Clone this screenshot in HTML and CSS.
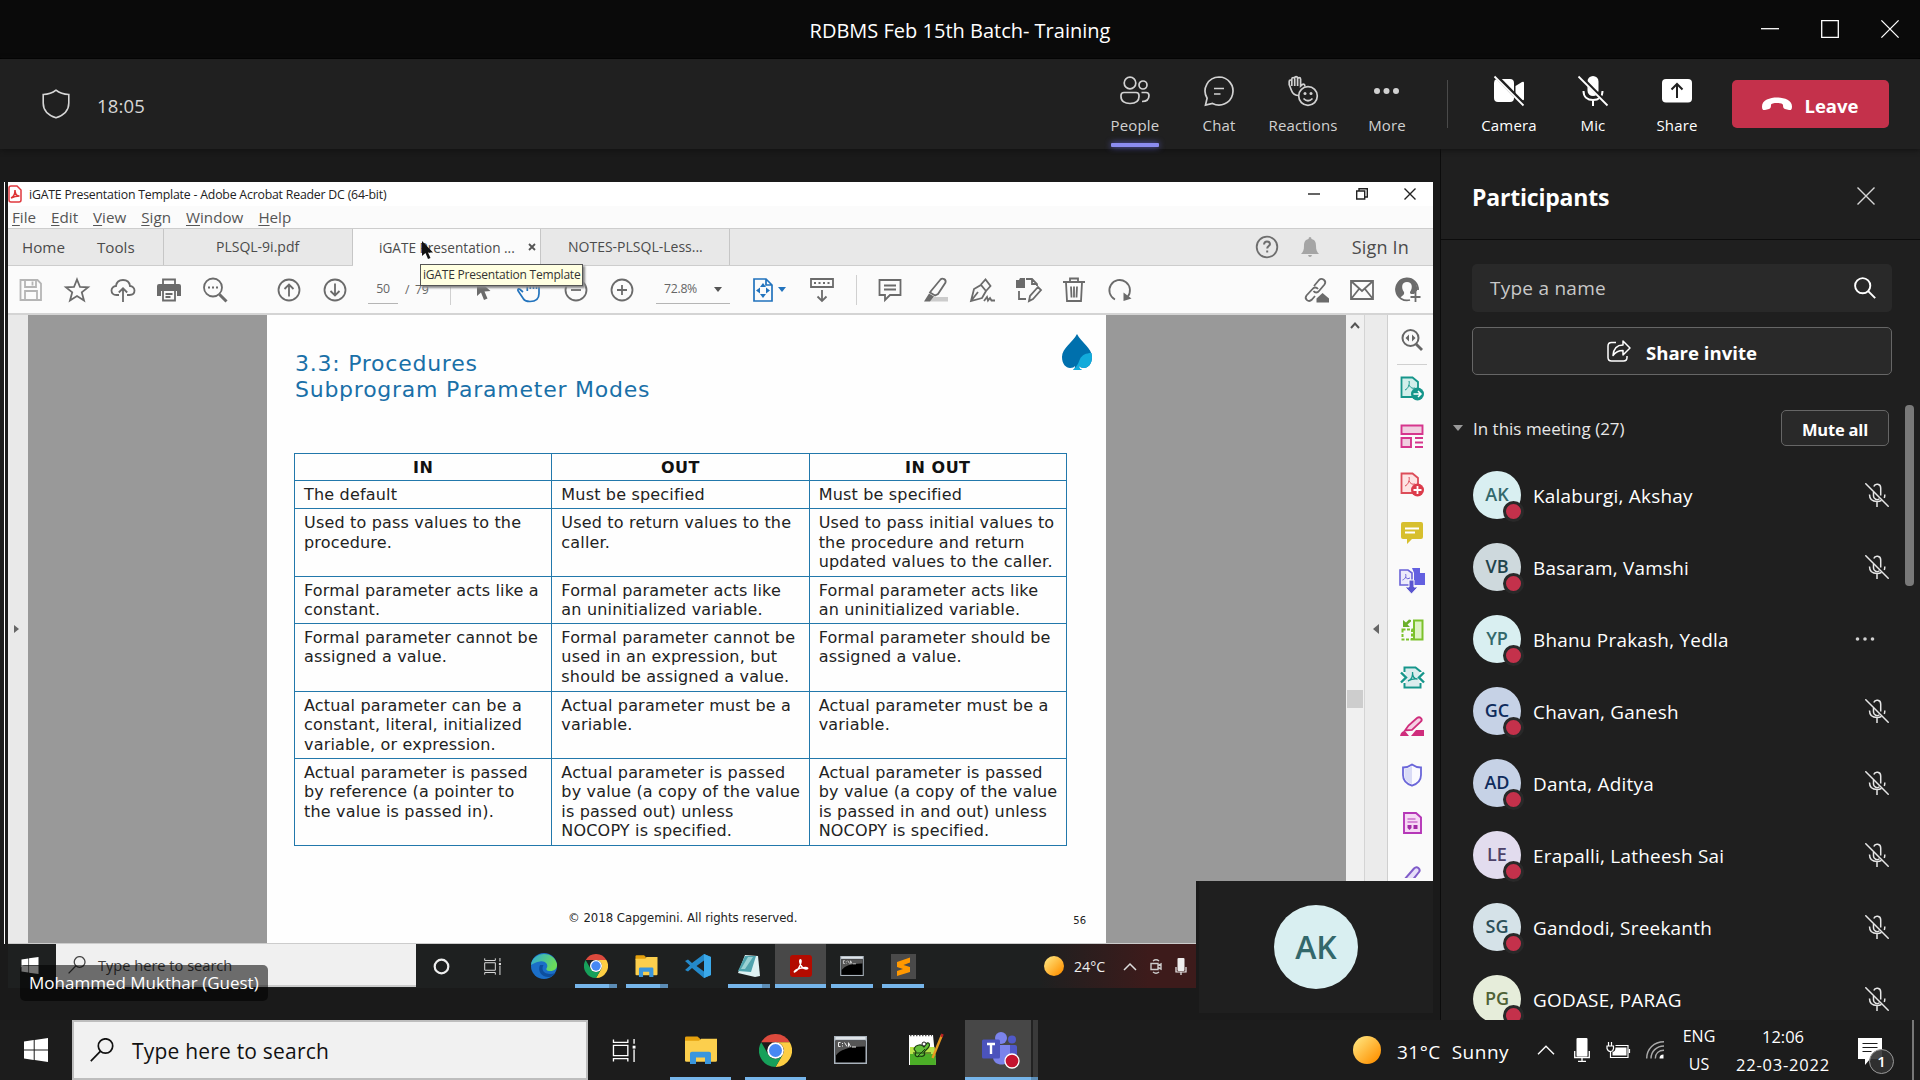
FILE: index.html
```html
<!DOCTYPE html>
<html lang="en">
<head>
<meta charset="utf-8">
<title>RDBMS Feb 15th Batch- Training</title>
<link rel="stylesheet" href="styles.css">
</head>
<body>
<svg class="sprite" aria-hidden="true">
  <symbol id="mic-off" viewBox="0 0 24 24"><g fill="none" stroke="#e6e6e6" stroke-width="1.5"><path d="M8.500 9v4a3.600 3.600 0 0 0 6 2.700M8.800 3.500C10 .2 15.700.5 15.700 5v7.500"/><path d="M4.500 11.500c0 4.500 3 7 7.600 7 1.500 0 3-.3 4.200-1M19.300 15q.5-1.500.5-3.500M12 18.500V24M.3.300l23.400 23.400"/></g></symbol>
  <symbol id="win" viewBox="0 0 24 24"><path fill="currentColor" d="M0 3.400 9.700 2v9.500H0zM10.700 1.900 24 0v11.500H10.700zM0 12.500h9.700V22L0 20.600zM10.700 12.500H24V24l-13.300-1.900z"/></symbol>
  <symbol id="lens" viewBox="0 0 24 24"><g fill="none" stroke="currentColor" stroke-width="1.700"><circle cx="15.500" cy="8" r="7.200"/><path d="M10.300 13.300.8 23.200"/></g></symbol>
  <symbol id="taskview" viewBox="0 0 24 24"><g fill="none" stroke="currentColor" stroke-width="1.400"><path d="M1 .5v3h15v-3M1 23.500v-3h15v3M1 6.700h15v10.600H1zM22.500 0v5M22.500 11v13"/></g><path fill="currentColor" d="M21 7h3v3h-3z"/></symbol>
  <symbol id="folder" viewBox="0 0 32 32"><path fill="#e5a00d" d="M0 2q0-1.500 1.500-1.500h11L15 3v4H0z"/><path fill="#fccf4d" d="M0 5.500h14l2-2.500h16V28q0 1.500-1.500 1.500h-29Q0 29.500 0 28z"/><path fill="#3a96dd" d="M5 32V20q0-2 2-2h17q2 0 2 2v12h-6v-7.500h-9V32z"/></symbol>
  <symbol id="chrome" viewBox="0 0 32 32"><path fill="#dc4a3d" d="M2.140 8A16 16 0 0 1 29.860 8H16z"/><path fill="#fdce43" d="M29.860 8A16 16 0 0 1 16 32l6.930-12A8 8 0 0 0 16 8z"/><path fill="#17a05a" d="M2.140 8A16 16 0 0 0 16 32l6.930-12A8 8 0 0 1 9.070 20z"/><circle cx="16" cy="16" r="8" fill="#fff"/><circle cx="16" cy="16" r="6.300" fill="#4788f4"/></symbol>
  <symbol id="cmd" viewBox="0 0 33 28"><path fill="#a9b2bb" d="M0 0h33v28H0z"/><path fill="#dfe4e8" d="M1.500 1h30v2.500h-30z"/><path d="M1.500 4.500h30v22h-30z"/><path fill="#555" d="M1.500 4.500h30v6Q8 10 1.500 20z"/><path fill="none" stroke="#eee" d="M6.500 6.500h-2v4h2M8.500 7v1M8.500 9.500v1M10.500 6.500l2.500 4M14.500 10.700v-4l2 4M18 11h4"/></symbol>
  <symbol id="sun" viewBox="0 0 28 28"><linearGradient id="sg" x1="0" y1="0" x2="1" y2="1"><stop offset=".1" stop-color="#ffe27a"/><stop offset=".9" stop-color="#ff9100"/></linearGradient><circle cx="14" cy="14" r="14" fill="url(#sg)"/></symbol>
</svg>

<header class="titlebar">
  <h1 class="titlebar-text">RDBMS Feb 15th Batch- Training</h1>
  <div class="winctl">
    <svg width="18" height="18" viewBox="0 0 18 18"><path d="M0 8.700h18"/></svg>
    <svg width="18" height="18" viewBox="0 0 18 18"><path d="M.7.700h16.600v16.600H.7z"/></svg>
    <svg width="18" height="18" viewBox="0 0 18 18"><path d="m.4.400 17.200 17.200M17.600.400.400 17.600"/></svg>
  </div>
</header>

<nav class="meetbar">
  <svg class="shield" width="28" height="30" viewBox="0 0 28 30"><path d="M14 1.200C10.500 4 6.500 5.400 1.200 5.500V14c0 7.500 5 12.300 12.800 14.800C21.800 26.300 26.800 21.500 26.800 14V5.500C21.500 5.400 17.500 4 14 1.200z"/></svg>
  <span class="clock">18:05</span>
  <div class="actions">
    <div class="act on"><svg width="30" height="30" viewBox="0 0 30 30"><g><circle cx="10" cy="7" r="5.800"/><circle cx="23" cy="9" r="4"/><path d="M1 19.500q0-3 3-3h12q3 0 3 3v1c0 5-4 7-9 7s-9-2-9-7zM21.500 16.500H26q3 0 3 3c0 4-2.500 6-7 6"/></g></svg><b>People</b></div>
    <div class="act"><svg width="30" height="30" viewBox="0 0 30 30"><g><path d="M15 1a14 14 0 1 1-6.500 26.400L1.500 29l1.600-6.800A14 14 0 0 1 15 1zM10 12.500h10M10 18h6.500"/></g></svg><b>Chat</b></div>
    <div class="act"><svg width="30" height="30" viewBox="0 0 30 30"><g><path d="M11 19.500c-4.500 0-6.500-2-7.500-5L1.200 8.500 1.200 5.500c0-2 2.400-2 2.600 0V3c.2-2 2.600-2 2.800 0V1.800C6.800.2 9.400.2 9.600 1.800V3c.2-1.800 2.900-1.800 3 .2V10l1.700-1.500c1.500-1 3 .2 2.300 2M3.800 5v5M6.700 3v7M9.600 3v7"/><circle cx="20" cy="20" r="9.300"/><path d="M15.500 22.500q4.500 4.500 9 0"/></g><circle cx="17" cy="17.500" r="1.500" fill="#d1d1d1"/><circle cx="23" cy="17.500" r="1.500" fill="#d1d1d1"/></svg><b>Reactions</b></div>
    <div class="act"><svg width="30" height="30" viewBox="0 0 30 30"><g class="f"><circle cx="5" cy="15" r="3"/><circle cx="14.500" cy="15" r="3"/><circle cx="24" cy="15" r="3"/></g></svg><b>More</b></div>
  </div>
  <i class="sep"></i>
  <div class="actions white">
    <div class="act"><svg width="30" height="30" viewBox="0 0 30 30"><path class="w" d="M5 3h11q4 0 4 4v15q0 4-4 4H4q-4 0-4-4V7q0-3 2-3.700zM21.500 10l6.500-4q2-1 2 1v16q0 2-2 1l-6.500-4z"/><path d="M1.500-.500 30 28.500" stroke="#202020" stroke-width="4"/><path d="M.5.500l29 29" stroke="#fff" stroke-width="1.800"/></svg><b>Camera</b></div>
    <div class="act"><svg width="30" height="30" viewBox="0 0 30 30"><rect class="w" x="9.500" y="0" width="11" height="20" rx="5.500"/><path d="M5.500 15c0 6 4 9 9.500 9s9.500-3 9.500-9M15 24v6" fill="none" stroke="#fff" stroke-width="2"/><path d="M1.500-.500 30 28.500" stroke="#202020" stroke-width="3.500"/><path d="M.5.500l29 29" stroke="#fff" stroke-width="1.800"/></svg><b>Mic</b></div>
    <div class="act"><svg width="30" height="30" viewBox="0 0 30 30"><rect class="w" y="3" width="30" height="23.500" rx="4"/><path d="M15 22V9M9.500 13.500 15 8l5.500 5.500" fill="none" stroke="#202020" stroke-width="2"/></svg><b>Share</b></div>
  </div>
  <button class="leave"><svg width="30" height="14" viewBox="0 0 30 14"><path fill="#fff" d="M15 .5C8 .5 0 3 0 9.500c0 3 1 4 3 3.500l4-1c1.500-.5 2-1.500 2-4 0-1.500 3-2 6-2s6 .5 6 2c0 2.500.5 3.500 2 4l4 1c2 .5 3-.5 3-3.500C30 3 22 .5 15 .5z"/></svg><span>Leave</span></button>
</nav>

<main class="meeting">
  <section class="stage">
    <div class="edge"></div>
    <div class="screen">
      <div class="ac-title">
        <svg width="14" height="18" viewBox="0 0 14 18"><path d="M1 3q0-2 2-2h6l4 4v10q0 2-2 2H3q-2 0-2-2z" fill="#fff" stroke="#e0383e" stroke-width="1.500"/><path d="M3 13c2-1 4-4 4-8 0 4 2 6 4.500 6C8 11 5 12 3 13z" fill="none" stroke="#d33" stroke-width="1.500"/></svg>
        <span>iGATE Presentation Template - Adobe Acrobat Reader DC (64-bit)</span>
        <div class="ac-win">
          <svg width="12" height="12" viewBox="0 0 12 12"><path d="M0 6h12"/></svg>
          <svg width="12" height="12" viewBox="0 0 12 12"><path d="M.7 3h8v8h-8zM3 3V.7h8.300V9H9"/></svg>
          <svg width="12" height="12" viewBox="0 0 12 12"><path d="m.5.500 11 11M11.500.500l-11 11"/></svg>
        </div>
      </div>
      <div class="ac-menu"><span><u>F</u>ile</span><span><u>E</u>dit</span><span><u>V</u>iew</span><span><u>S</u>ign</span><span><u>W</u>indow</span><span><u>H</u>elp</span></div>
      <div class="ac-tabs">
        <div class="tab home"><span>Home</span><span>Tools</span></div>
        <div class="tab mid"><span>PLSQL-9i.pdf</span></div>
        <div class="tab cur"><span>iGATE Presentation ...</span><svg width="8" height="8" viewBox="0 0 8 8"><path d="m1 1 6 6M7 1 1 7" stroke="#555" stroke-width="1.800"/></svg></div>
        <div class="tab last"><span>NOTES-PLSQL-Less...</span></div>
        <div class="sign">
          <svg width="24" height="24" viewBox="0 0 24 24"><circle cx="12" cy="12" r="10.300" fill="none" stroke="#6e6e6e" stroke-width="1.800"/><path d="M9 9.500q.3-3 3-3t3 2.500c0 2-2.800 2.200-2.800 4.500M12.200 15.500v2" fill="none" stroke="#6e6e6e" stroke-width="2"/></svg>
          <svg width="18" height="20" viewBox="0 0 18 20"><path fill="#a5a5a5" d="M9 0q1.500 0 1.500 2C14.500 3 15 6 15 9c0 4 1 6 3 8H0c2-2 3-4 3-8 0-3 .5-6 4.500-7Q7.500 0 9 0zM7 18h4q-.5 2-2 2t-2-2z"/></svg>
          <span>Sign In</span>
        </div>
      </div>
      <div class="ac-tools">
        <div class="ic"><svg width="24" height="24" viewBox="0 0 24 24" class="lt"><path d="M1.500 2h17L22 5.500V22H1.500zM6 2v7h11V2M13.500 3.500v4M6 22v-9h12v9"/></svg></div>
        <div class="ic"><svg width="26" height="26" viewBox="0 0 26 26"><path d="m13 2.500 3 7.500 8 .4-6.200 5 2.200 8L13 19l-7 4.400 2.200-8L2 10.400l8-.4z"/></svg></div>
        <div class="ic"><svg width="26" height="26" viewBox="0 0 26 26"><path d="M9 18H6.500C3 18 1.500 15.800 1.500 13.500S3.500 9 6 9c.5-4 3.500-6 7-6s6.500 2 7 6c2.500 0 4.500 2.200 4.500 4.500S23 18 19.500 18H17M13 25V11.500M8.800 15.500l4.200-4.200 4.200 4.200"/></svg></div>
        <div class="ic"><svg width="24" height="24" viewBox="0 0 24 24"><path d="M6 7V1.500h12V7"/><path class="g" stroke="none" d="M0 8q0-2 2-2h20q2 0 2 2v10h-4v-5H4v5H0z"/><path d="M6 13v9.500h12V13M8.500 16h7M8.500 19h5"/></svg></div>
        <div class="ic"><svg width="26" height="26" viewBox="0 0 26 26"><circle cx="11" cy="10.500" r="9"/><path class="thick" d="m17.500 17.500 7 7"/><path class="dot" d="M6 9.500h2v2H6zM10 9.500h2v2h-2zM14 9.500h2v2h-2z"/></svg></div>
        <div class="ic gap"><svg width="24" height="24" viewBox="0 0 24 24"><circle cx="12" cy="12" r="10.500"/><path d="M12 18.500V6.500M7.500 11 12 6.500l4.500 4.500"/></svg></div>
        <div class="ic"><svg width="24" height="24" viewBox="0 0 24 24"><circle cx="12" cy="12" r="10.500"/><path d="M12 5.500v12M7.500 13l4.500 4.500 4.500-4.500"/></svg></div>
        <div class="pages"><span class="box">50</span><span class="tot">/&nbsp; 79</span></div>
        <i class="bar"></i>
        <div class="ic"><svg width="14" height="22" viewBox="0 0 14 22"><path class="dot" d="M0 0v17l4-3.500L7 21l3.500-1.500-3-7 6-.5z"/></svg></div>
        <div class="ic"><svg width="26" height="26" viewBox="0 0 26 26" class="bl"><path d="M6 15 2.500 12C1 11 .5 13 1.200 14l5 7.500c1 2 3 3 6.800 3 6 0 9-3 9-8V8c0-1.500-2.500-1.500-2.500 0v4M19.500 12V5c0-1.500-3-1.500-3 0v7M16.500 12V3.500c0-1.500-3.200-1.500-3.200 0V12M13.300 12V5c0-1.500-3-1.500-3 0v9"/></svg></div>
        <div class="ic"><svg width="24" height="24" viewBox="0 0 24 24"><circle cx="12" cy="12" r="10.500"/><path d="M7 12h10"/></svg></div>
        <div class="ic"><svg width="24" height="24" viewBox="0 0 24 24"><circle cx="12" cy="12" r="10.500"/><path d="M7 12h10M12 7v10"/></svg></div>
        <div class="zoom"><span>72.8%</span><i class="tri"></i></div>
        <div class="ic fit"><svg width="20" height="24" viewBox="0 0 20 24" class="bl"><path d="M1 1h12l6 6v16H1zM13 1v6h6"/><path class="bdot" d="m10 5 3 4H7zM10 20l-3-4h6zM3 12.500l4-3v6zM17 12.500l-4 3v-6z"/></svg><i class="tri b"></i></div>
        <div class="ic scr"><svg width="24" height="26" viewBox="0 0 24 26"><path d="M1 2h22v8H1zM12 13v11M7.500 19.500 12 24l4.500-4.500"/><path d="M4 6h16" stroke-dasharray="2 2.500"/></svg></div>
        <i class="bar r"></i>
        <div class="ic"><svg width="24" height="24" viewBox="0 0 24 24"><path d="M1.500 2h21v15H12l-5 5v-5H1.500zM6 7.500h12M6 11.500h12"/></svg></div>
        <div class="ic"><svg width="26" height="26" viewBox="0 0 26 26"><path class="shade" d="M11 20h14v4.500H7z"/><path d="m8 14 9.500-11.500c2-2 6 0 5 3L15 17l-3 1.500-5-3z"/><path class="dot" d="M6 16.500 1 24.500h6l4-5z"/></svg></div>
        <div class="ic"><svg width="26" height="26" viewBox="0 0 26 26"><path d="M2 24 5 12l7-4 5 6-4 7zM2 24l7-9M12 7.500l4.500-5 5 6.500-4.500 5"/><path d="m15 24 3-4 1 3.500 2-2.500 1.500 2.500H26"/></svg></div>
        <div class="ic"><svg width="26" height="26" viewBox="0 0 26 26"><path class="dot" d="M1 3h3l1-2h5v10H1z"/><path d="M11 2h6l5 5v2M17 2v5h5M4 14v8h7M14 24l1-5 8-9 3 3-8 9z"/></svg></div>
        <div class="ic"><svg width="24" height="26" viewBox="0 0 24 26"><path d="M1 5h22M8 4.500V1.500h8v3M4 5.500 5 24h14l1-18.500M9 9.500l.5 11M12 9.500v11M15 9.500 14.500 20.500"/></svg></div>
        <div class="ic"><svg width="24" height="24" viewBox="0 0 24 24"><path d="M7 21.500A10.300 10.300 0 1 1 19.500 19"/><path class="dot" d="m15.500 14.500 0 8.500 8-2.500z"/></svg></div>
        <div class="grow"></div>
        <div class="ic"><svg width="26" height="26" viewBox="0 0 26 26"><path d="m11 9 5-6c3-3 8 1 5.500 4.500L16 14c-1.500 2-4 2-5.500 0M15 12c-1.500-2-4-2-5.500 0l-6 6.500C1 22 5.500 26 9 22.500l3-3.500"/><path class="dot" d="M13.500 25.500v-4l6-5.500 6.500 5.500v4z"/></svg></div>
        <div class="ic"><svg width="24" height="20" viewBox="0 0 24 20"><path d="M1 1h22v18H1zM1 1l11 10L23 1M1 19l8-10M23 19 15 9"/></svg></div>
        <div class="ic"><svg width="26" height="26" viewBox="0 0 26 26"><path d="M15 23A11 11 0 1 1 23 13"/><path class="dot" d="M12 1A11 11 0 0 0 5 20.500C9 18 9.500 17 9 15 6 11 6.500 5 12 5s6 6 3 10c0 1 0 1.500 1 2h3l3-3A11 11 0 0 0 12 1z"/><path d="M20.500 15v10M15.500 20h10"/></svg></div>
      </div>
      <div class="doc">
        <div class="navstrip"><i></i></div>
        <div class="canvas">
          <article class="slide">
            <div class="slide-head">
              <h2>3.3: Procedures<br>Subprogram Parameter Modes</h2>
              <svg width="30" height="37" viewBox="0 0 30 37"><path fill="#0070ad" d="M15 0C19 8 30 14 30 23c0 7-4 11-8 11-2 0-4-1-5-2 0 2 1 3 3 4H11c1.500-1 2-2 2-4-1 1-2 2-5 2-4 0-8-4-8-11C0 14 11 8 15 0z"/><path fill="#12abdb" d="M29.500 19C24 19 20 21 18 25c-1.500 3-1.500 6-7 11h9c-2-1-3-2-3-4 1 1 3 2 5 2 4 0 8-4 8-11z"/></svg>
            </div>
            <table>
              <tr class="r1"><th>IN</th><th>OUT</th><th>IN OUT</th></tr>
              <tr class="r2"><td>The default</td><td>Must be specified</td><td>Must be specified</td></tr>
              <tr class="r3"><td>Used to pass values to the<br>procedure.</td><td>Used to return values to the<br>caller.</td><td>Used to pass initial values to<br>the procedure and return<br>updated values to the caller.</td></tr>
              <tr class="r4"><td>Formal parameter acts like a<br>constant.</td><td>Formal parameter acts like<br>an uninitialized variable.</td><td>Formal parameter acts like<br>an uninitialized variable.</td></tr>
              <tr class="r5"><td>Formal parameter cannot be<br>assigned a value.</td><td>Formal parameter cannot be<br>used in an expression, but<br>should be assigned a value.</td><td>Formal parameter should be<br>assigned a value.</td></tr>
              <tr class="r6"><td>Actual parameter can be a<br>constant, literal, initialized<br>variable, or expression.</td><td>Actual parameter must be a<br>variable.</td><td>Actual parameter must be a<br>variable.</td></tr>
              <tr class="r7"><td>Actual parameter is passed<br>by reference (a pointer to<br>the value is passed in).</td><td>Actual parameter is passed<br>by value (a copy of the value<br>is passed out) unless<br>NOCOPY is specified.</td><td>Actual parameter is passed<br>by value (a copy of the value<br>is passed in and out) unless<br>NOCOPY is specified.</td></tr>
            </table>
            <footer><span class="copy">© 2018 Capgemini. All rights reserved.</span><span class="num">56</span></footer>
          </article>
        </div>
        <div class="vscroll"><svg width="10" height="7" viewBox="0 0 10 7"><path d="m1 6 4-4.500L9 6" fill="none" stroke="#555" stroke-width="2"/></svg><i></i></div>
        <div class="collapse"><i></i></div>
        <div class="rtools">
          <svg width="22" height="22" viewBox="0 0 22 22" class="mag"><circle cx="9.500" cy="9" r="8" fill="none" stroke="#666" stroke-width="2"/><path d="m15 15 6 6" stroke="#666" stroke-width="2.800"/><path fill="#666" d="M8 5.500v7L4.500 9zM11 5.500v7L14.500 9z"/></svg>
          <div class="rt"><svg width="24" height="25" viewBox="0 0 24 25"><path d="M1.500 1.500h11L18 6v15H1.500z" fill="#d3efeb" stroke="#16968b" stroke-width="1.800"/><path d="M5 14c3-1 5-6 4-9M9 9c1 2 3 4 6 3" stroke="#16968b" fill="none"/><circle cx="17.500" cy="18" r="6.500" fill="#16968b"/><path d="M13.500 18h7M18 15l3 3-3 3" stroke="#fff" stroke-width="1.500" fill="none"/></svg></div>
          <div class="rt"><svg width="24" height="24" viewBox="0 0 24 24" fill="#f0cfe0" stroke="#d6368d" stroke-width="1.900"><path d="M1.500 1.500h21v8.500h-21zM1.500 14h9.500v9H1.500zM15 14h8M15 18.500h8M15 23h8"/></svg></div>
          <div class="rt"><svg width="24" height="25" viewBox="0 0 24 25"><path d="M1.500 1.500h11L18 6v15H1.500z" fill="#fde3e3" stroke="#dc4c58" stroke-width="1.800"/><path d="M5 14c3-1 5-6 4-9M9 9c1 2 3 4 6 3" stroke="#dc4c58" fill="none"/><circle cx="17.500" cy="18" r="6.500" fill="#dc3b4b"/><path d="M13.500 18h8M17.500 14v8" stroke="#fff" stroke-width="1.800"/></svg></div>
          <div class="rt"><svg width="22" height="22" viewBox="0 0 22 22"><path fill="#d7bf2e" d="M0 2q0-2 2-2h18q2 0 2 2v13q0 2-2 2h-9l-5 5v-5H2q-2 0-2-2z"/><path d="M4 6.500h14M4 10.500h10" stroke="#fff" stroke-width="1.800"/></svg></div>
          <div class="rt"><svg width="26" height="26" viewBox="0 0 26 26"><path d="M1 2h8l4 3v12H1z" fill="#ecebfb" stroke="#6a63d8" stroke-width="1.600"/><path d="M3.500 12c3-1 4-4 3-6M6 9q3 3 5 1" stroke="#6a63d8" fill="none"/><path fill="#6360e0" d="M13 0h8v5h5v12H15V5z"/><path fill="#5a55cf" stroke="#fafafa" d="M10 12h5v7h4l-6.500 7L6 19h4z"/></svg></div>
          <div class="rt"><svg width="23" height="22" viewBox="0 0 23 22"><path d="M13 1.500h8.500v19H13z" fill="#def3c5" stroke="#7cc22c" stroke-width="2"/><path d="M1.500 10.500h9.500v10H1.500z" fill="none" stroke="#7cc22c" stroke-width="2" stroke-dasharray="3 1.500"/><path fill="#6bb02a" d="M2 1v7h7L6.500 5.500 10 2.500V1L8 .5 5 3.500z"/></svg></div>
          <div class="rt"><svg width="25" height="23" viewBox="0 0 25 23"><path fill="#dcecee" d="M5.500 2.500h10l4 3v15h-14z"/><path d="M4.500 6V1.500h11l5 4V6M4.500 17v4.500h16V17" fill="none" stroke="#16968b" stroke-width="2"/><path d="m1 6.500 5 5-5 5M24 6.500l-5 5 5 5" fill="none" stroke="#16968b" stroke-width="2.400"/><path d="M8 15c4-1 5-6 4.500-9 0 5 2 7 5 7-4-.5-6 0-9.500 2z" stroke="#16968b" fill="none" stroke-width="1.300"/></svg></div>
          <div class="rt"><svg width="24" height="20" viewBox="0 0 24 20"><path d="m5 14.500 3.500-5 8.500-7.500c3-2 6 1 4 3.500L12 14z" fill="#f5d0e3" stroke="#cf2d7c" stroke-width="1.800"/><path fill="#cf2d7c" d="M0 20q1-5 5-5l4 5zM11 20l5-6h8v6z"/></svg></div>
          <div class="rt"><svg width="20" height="24" viewBox="0 0 20 24"><path d="M10 1.500q4 3 9 3V12c0 6-4 9-9 10.700C5 21 1 18 1 12V4.500q5 0 9-3z" fill="#fafaff" stroke="#6a66d9" stroke-width="1.800"/><path fill="#d9dbf6" d="M10 3v18c-4-1-7.500-4-7.500-9V6Q6.500 6 10 3z"/></svg></div>
          <div class="rt"><svg width="19" height="22" viewBox="0 0 19 22"><path d="M1 1h12l5 4.500V21H1z" fill="#f6d9f5" stroke="#b536b7" stroke-width="1.900"/><path d="M4.500 7h8M4.500 10h10" stroke="#b536b7" stroke-width="1.200"/><path fill="#a22aa5" d="M4.500 13h4v3l-2 2-2-2zM10.500 13h4v4h-4z"/></svg></div>
          <div class="rt"><svg width="18" height="13" viewBox="0 0 18 13" class="clip"><path d="m1 15 10-11.500c3-3 7 .5 5 3.500L8 17" fill="#e6def8" stroke="#7f5bc9" stroke-width="2"/></svg></div>
        </div>
      </div>
      <div class="r-taskbar">
        <div class="r-start"><svg width="18" height="17"><use href="#win"/></svg></div>
        <div class="r-search"><svg width="18" height="18"><use href="#lens"/></svg><span>Type here to search</span></div>
        <div class="r-ic"><svg width="17" height="17" viewBox="0 0 17 17"><circle cx="8.500" cy="8.500" r="6.800" fill="none" stroke="#eee" stroke-width="2.200"/></svg></div>
        <div class="r-ic"><svg width="17" height="17" class="lite"><use href="#taskview"/></svg></div>
        <div class="r-ic"><svg width="26" height="26" viewBox="0 0 26 26"><linearGradient id="eg" x1="0" y1="0" x2="1" y2=".4"><stop offset="0" stop-color="#2ba9df"/><stop offset="1" stop-color="#6bdc5a"/></linearGradient><circle cx="13" cy="13" r="13" fill="#1b6fc8"/><path fill="url(#eg)" d="M0 12C1-1 22-4 26 11c.5 5-3 7.500-8 7-3-.5-3-2-2-3.500 1.500-3-2-7-7-6-4 .6-7 2-9 3.500z"/><path fill="#0d4f9e" d="M9 12c-3 6 2 13 10 12 2-.5 4-2 5.500-4-6 2-13 1-13-5 0-1 .5-2 1-3z"/></svg></div>
        <div class="r-ic ul two"><svg width="24" height="24"><use href="#chrome"/></svg></div>
        <div class="r-ic ul two"><svg width="23" height="22"><use href="#folder"/></svg></div>
        <div class="r-ic"><svg width="26" height="24" viewBox="0 0 26 24"><path fill="#2489ca" d="M19 0 26 3v18l-7 3L7 14l-4 3.500-3-1.500 5-4.500L0 7l3-1.500L7 9zM19 6.500 11.500 12l7.500 5.500z"/><path fill="#3ba9ea" d="M19 0l7 3v18l-7 3z"/></svg></div>
        <div class="r-ic ul two"><svg width="24" height="24" viewBox="0 0 24 24"><path fill="#def1f2" d="m8 1 13 1 2 20-5 1-17-4z"/><path fill="#4fa3ad" d="M8 2h11l-5 16-13-1z"/><path fill="#9ad2d4" d="m11 3 5 0-8 12H4z"/></svg></div>
        <div class="r-ic ul sel"><svg width="22" height="22" viewBox="0 0 22 22"><rect width="22" height="22" rx="3" fill="#b30b00"/><path fill="none" stroke="#fff" stroke-width="1.500" d="M4.500 17c3-1 6-6 6.500-10 .3-3-1.500-3-1.200 0 .5 3.500 3 7 6.200 7 3 0 1.500-2-1.500-1.500-3.500.3-6 1-8.500 2.500-1.500 1-2 2-1.500 2z"/></svg></div>
        <div class="r-ic ul"><svg width="24" height="20"><use href="#cmd"/></svg></div>
        <div class="r-ic ul"><svg width="25" height="25" viewBox="0 0 25 25"><path fill="#4a4a4a" d="M0 0h25v25H0z"/><path fill="#ff9800" d="m6 8 13-4.500v5L12.500 11l6.500 2v5L6 22v-5l6-2-6-2z"/></svg></div>
        <div class="r-tray">
          <svg width="20" height="20"><use href="#sun"/></svg><span>24°C</span>
          <svg width="14" height="9" viewBox="0 0 14 9"><path d="m1 8 6-6 6 6" fill="none" stroke="#ddd" stroke-width="1.500"/></svg>
          <svg width="12" height="17" viewBox="0 0 12 17"><g fill="none" stroke="#ccc" stroke-width="1.400"><path d="M1 5.500h7v6H1zM8 7.500l3-1.500v5l-3-1.500M3 3q3-2.500 6 0M3 14q3 2.500 6 0"/></g></svg>
          <svg width="12" height="17" viewBox="0 0 12 17"><rect x="2.500" width="7" height="13" rx="1" fill="#eee"/><path d="M1 9v5h10V9M6 14v3" fill="none" stroke="#eee" stroke-width="1.200"/></svg>
        </div>
      </div>
    </div>
    <svg class="pointer" width="11" height="18" viewBox="0 0 11 18"><path fill="#111" d="M0 0v15l3.500-3L6 18l2.500-1L6 11.500h5z"/></svg>
    <div class="tooltip">iGATE Presentation Template</div>
    <div class="speaker">Mohammed Mukthar (Guest)</div>
    <div class="self"><div class="self-av">AK</div></div>
  </section>

  <aside class="panel">
    <div class="p-head"><h2>Participants</h2><svg width="18" height="18" viewBox="0 0 18 18"><path d="m.5.500 17 17M17.500.500l-17 17" stroke="#d6d6d6" stroke-width="1.400"/></svg></div>
    <div class="p-find"><span>Type a name</span><svg width="22" height="22" viewBox="0 0 22 22"><g fill="none" stroke="#fff" stroke-width="1.900"><circle cx="8.700" cy="8.700" r="7.600"/><path d="m14.200 14.200 7 7"/></g></svg></div>
    <div class="p-invite"><svg width="24" height="22" viewBox="0 0 24 22"><g fill="none" stroke="#fff" stroke-width="1.500" stroke-linejoin="round"><path d="M9 2.500H4.500Q1 2.500 1 6v11.500Q1 21 4.500 21h12q3.500 0 3.500-3.500V16"/><path d="M16 1v4C10 5 6.500 9 6 15.500c2.500-3.500 5.500-5 10-5v4.500l7-7z"/></g></svg><span>Share invite</span></div>
    <div class="p-sec"><i></i><span>In this meeting (27)</span><b>Mute all</b></div>
    <ul class="people">
      <li><span class="av a1">AK</span><span class="nm">Kalaburgi, Akshay</span><svg width="24" height="24"><use href="#mic-off"/></svg></li>
      <li><span class="av a2">VB</span><span class="nm">Basaram, Vamshi</span><svg width="24" height="24"><use href="#mic-off"/></svg></li>
      <li><span class="av a1">YP</span><span class="nm">Bhanu Prakash, Yedla</span><svg class="dots" width="20" height="4" viewBox="0 0 20 4"><g fill="#d0d0d0"><circle cx="2.500" cy="2" r="1.800"/><circle cx="10" cy="2" r="1.800"/><circle cx="17.500" cy="2" r="1.800"/></g></svg></li>
      <li><span class="av a3">GC</span><span class="nm">Chavan, Ganesh</span><svg width="24" height="24"><use href="#mic-off"/></svg></li>
      <li><span class="av a3">AD</span><span class="nm">Danta, Aditya</span><svg width="24" height="24"><use href="#mic-off"/></svg></li>
      <li><span class="av a4">LE</span><span class="nm">Erapalli, Latheesh Sai</span><svg width="24" height="24"><use href="#mic-off"/></svg></li>
      <li><span class="av a5">SG</span><span class="nm">Gandodi, Sreekanth</span><svg width="24" height="24"><use href="#mic-off"/></svg></li>
      <li><span class="av a6">PG</span><span class="nm">GODASE, PARAG</span><svg width="24" height="24"><use href="#mic-off"/></svg></li>
    </ul>
    <i class="p-scroll"></i>
  </aside>
</main>

<footer class="taskbar">
  <div class="start"><svg width="24" height="24"><use href="#win"/></svg></div>
  <div class="search"><svg width="24" height="24"><use href="#lens"/></svg><span>Type here to search</span></div>
  <div class="app tv"><svg width="24" height="23"><use href="#taskview"/></svg></div>
  <div class="app ul"><svg width="32" height="28" viewBox="0 0 32 32" preserveAspectRatio="none"><use href="#folder" width="32" height="32"/></svg></div>
  <div class="app ul"><svg width="33" height="33"><use href="#chrome"/></svg></div>
  <div class="app"><svg width="33" height="28"><use href="#cmd"/></svg></div>
  <div class="app"><svg width="34" height="32" viewBox="0 0 34 32"><path fill="#fff" d="M0 1h24l3 30H0z"/><path fill="#b9e34a" d="M1 13h24.500l1 9H1z"/><path fill="#4cae27" d="M1 20h25.500l.5 11H1z"/><path fill="none" stroke="#555" stroke-width="1.400" stroke-dasharray="1.500 1.500" d="M1 1.500h22"/><path fill="#63bf3a" stroke="#1c3d10" stroke-width="1.200" d="M5 15c2-5 8-5 10-2l3-4c2-1 4 2 1 5l-4 4c2 3-1 5-4 4-4 2-6-1-4-4z"/><path d="M4 19h18M8 23l8-8" stroke="#1c3d10"/><circle cx="15" cy="10" r="2" fill="#fff" stroke="#222"/><path d="M33 1 23.500 24" stroke="#e99a20" stroke-width="2.400"/><path d="m33.500 0-1 3" stroke="#b22" stroke-width="2.400"/></svg></div>
  <div class="app teams"><svg width="38" height="36" viewBox="0 0 38 36"><circle cx="19" cy="6" r="6" fill="#7b83eb"/><circle cx="30" cy="7.500" r="4" fill="#5059c9"/><path fill="#5059c9" d="M25 13h8q2 0 2 2v8c0 4-4 6-7 5z"/><path fill="#7b83eb" d="M11 13h17v12c0 10-17 10-17 0z"/><rect y="7.500" width="18" height="19" rx="1.500" fill="#4b53bc"/><path d="M5 12h8M9 12v10" stroke="#fff" stroke-width="2.400"/><circle cx="30" cy="29" r="7" fill="#c4142f" stroke="#fff" stroke-width="1.300"/></svg></div>
  <div class="tray">
    <svg width="28" height="28"><use href="#sun"/></svg>
    <span class="temp">31°C&nbsp; Sunny</span>
    <svg class="chev" width="18" height="10" viewBox="0 0 18 10"><path d="m1 9.300 8-8 8 8" fill="none" stroke="#fff" stroke-width="1.400"/></svg>
    <svg class="tmic" width="16" height="24" viewBox="0 0 16 24"><rect x="2.500" width="11" height="18.500" rx="1" fill="#fff"/><path d="M.7 13v6.500h14.600V13M8 20v3.300M4 23.300h8" fill="none" stroke="#fff" stroke-width="1.300"/></svg>
    <svg class="batt" width="24" height="18" viewBox="0 0 24 18"><path d="M2.500 1v4M5.500 1v4M1 5h6.500v2.500q-.5 3-3 3T1 7.500zM4.500 10v6.500H22v-12H9.500M23.500 8v4" fill="none" stroke="#fff" stroke-width="1.200"/><path fill="#fff" d="M9.500 6.500h11v8H6.500V11q3-.5 3-4.500z"/></svg>
    <svg class="wifi" width="18" height="18" viewBox="0 0 18 18"><g fill="none" stroke="#aaa" stroke-width="1.400"><path d="M.7 17.500C.7 8 8 .7 18 .7M5 17.500C5 10.500 10.500 5 18 5M9.300 17.500c0-5 3.500-8.200 8.700-8.200"/></g><path d="M13.500 17.500a4 4 0 0 1 4-4v4z" fill="#fff"/></svg>
    <div class="two-l lang"><span>ENG</span><span>US</span></div>
    <div class="two-l time"><span>12:06</span><span class="date">22-03-2022</span></div>
    <div class="note"><svg width="24" height="28" viewBox="0 0 24 28"><path fill="#fff" d="M0 0h24v21H12l-5 6v-6H0z"/><path d="M4.500 5.500h15M4.500 9.500h15M4.500 13.500h9" stroke="#1c1c1c" stroke-width="1.200"/></svg><span>1</span></div>
    <i class="peek"></i>
  </div>
</footer>
</body>
</html>
```
FILE: styles.css
```css
*, *::before, *::after { box-sizing: border-box; }
html, body { height: 100%; }
body { margin: 0; width: 1920px; height: 1080px; overflow: hidden; background: #1a1a1a; color: #fff; font-family: "Open Sans", "Noto Sans", sans-serif; display: flex; flex-direction: column; }
h1, h2, ul { margin: 0; padding: 0; font-weight: 400; }
svg { display: block; flex: none; overflow: visible; }
.sprite { position: absolute; width: 0; height: 0; }
span, b { white-space: nowrap; }

/* window title */
.titlebar { flex: 0 0 59px; background: #0a0a0a; border-bottom: 1px solid #000; display: grid; grid-template-columns: 1fr auto 1fr; align-items: center; }
.titlebar-text { grid-column: 2; font-size: 20px; padding-top: 2px; }
.winctl { display: flex; justify-content: flex-end; gap: 42px; padding-right: 21px; }
.winctl path { fill: none; stroke: #fff; stroke-width: 1.3; }

/* meeting controls */
.meetbar { flex: 0 0 90px; background: #202020; display: flex; align-items: center; padding-left: 42px; box-shadow: 0 1px 5px #111; z-index: 1; }
.shield path { fill: none; stroke: #d6d6d6; stroke-width: 1.6; }
.clock { font-size: 18.500px; letter-spacing: .15px; margin: 2px 0 0 27px; color: #d6d6d6; }
.actions { display: flex; height: 90px; }
.meetbar .actions:first-of-type { margin-left: auto; }
.act { width: 84px; display: flex; flex-direction: column; align-items: center; padding-top: 17px; color: #d1d1d1; }
.act b { font-weight: 400; font-size: 15px; line-height: 20px; margin-top: 9px; letter-spacing: .15px; }
.act g { fill: none; stroke: #d1d1d1; stroke-width: 1.7; }
.act g.f { fill: #d1d1d1; stroke: none; }
.act .w { fill: #fff; }
.white .act { color: #fff; }
.act.on::after { content: ""; width: 48px; height: 4px; border-radius: 1px; background: #8b8cf0; margin-top: 8px; box-shadow: 0 0 6px #5b5fc7; }
.sep { width: 1px; height: 48px; background: #4a4a4a; margin: 0 19px 0 18px; }
.leave { margin: 0 31px 0 13px; width: 157px; height: 48px; border: 0; border-radius: 5px; background: #c4314b; color: #fff; font: 700 18.500px "Open Sans", sans-serif; display: flex; align-items: center; justify-content: center; gap: 12px; }
.leave span { padding-top: 2px; }

.meeting { flex: 1; min-height: 0; display: flex; }
.stage { width: 1440px; flex: none; padding: 33px 7px 0 4px; display: flex; position: relative; background: #1a1a1a; }
.edge { width: 4px; height: 762px; border-left: 1px solid #fff; flex: none; }
.screen { width: 1425px; height: 806px; display: flex; flex-direction: column; background: #fff; color: #333; }

/* shared reader window */
.ac-title { height: 24px; display: flex; align-items: center; font-size: 12.300px; letter-spacing: -.2px; color: #222; gap: 7px; }
.ac-win { margin-left: auto; display: flex; gap: 36px; padding-right: 17px; }
.ac-win path { fill: none; stroke: #222; stroke-width: 1.4; }
.ac-menu { height: 22px; background: #fbfbfb; display: flex; align-items: center; padding-left: 4px; gap: 15px; font-size: 15.200px; color: #555; }
.ac-menu u { text-underline-offset: 2px; }
.ac-tabs { height: 38px; background: #e8e8e8; border-top: 1px solid #cdcdcd; border-bottom: 1px solid #cdcdcd; display: flex; color: #4b4b4b; }
.tab { display: flex; align-items: center; border-right: 1px solid #c6c6c6; font-size: 14px; padding-bottom: 1px; }
.home { width: 156px; padding-left: 14px; gap: 32px; font-size: 15.200px; }
.mid { width: 189px; padding-left: 52px; }
.cur { width: 188px; padding-left: 26px; gap: 13px; background: #fbfbfb; margin-bottom: -1px; font-size: 13.600px; }
.last { width: 189px; padding-left: 27px; }
.sign { margin-left: auto; display: flex; align-items: center; padding: 0 24px 1px 0; font-size: 18px; letter-spacing: .2px; }
.sign svg + svg { margin: 0 33px 0 22px; }
.ac-tools { height: 49px; background: #fbfbfb; border-bottom: 2px solid #d4d4d4; display: flex; align-items: center; color: #666; font-size: 12.300px; letter-spacing: -.3px; }
.ic { width: 46px; flex: none; display: flex; justify-content: center; align-items: center; }
.ic path, .ic circle { fill: none; stroke: #6b6b6b; stroke-width: 1.8; }
.ic .g, .ic .dot { fill: #6b6b6b; stroke: none; }
.ic .thick { stroke-width: 3; }
.ic .shade { fill: #ccc; stroke: none; }
.ic .lt path { stroke: #b5b5b5; }
.ic .bl path { stroke: #2273bd; stroke-width: 1.7; }
.ic .bl .bdot { fill: #2273bd; stroke: none; }
.ic.gap { margin-left: 28px; }
.pages { display: flex; align-items: center; width: 92px; padding-left: 10px; }
.box { width: 30px; height: 29px; line-height: 28px; border-bottom: 1px solid #b5b5b5; text-align: center; }
.tot { margin-left: 7px; }
.bar { width: 1px; height: 30px; background: #d0d0d0; margin-right: 10px; }
.zoom { margin-left: 11px; width: 74px; height: 29px; line-height: 28px; border-bottom: 1px solid #b5b5b5; display: flex; align-items: center; justify-content: space-between; padding: 0 8px; }
.tri { border: 4px solid transparent; border-top: 5px solid #555; border-bottom: 0; }
.tri.b { border-top-color: #2273bd; margin-left: 5px; }
.ic.fit { margin-left: 20px; width: 38px; }
.ic.scr { margin-left: 11px; }
.bar.r { margin-left: 11px; }
.grow { flex: 1; }
.ac-tools .ic:last-child { margin-right: 2px; }

.doc { flex: 1; min-height: 0; display: flex; overflow: hidden; border-bottom: 1px solid #ccc; }
.navstrip { width: 20px; background: #e9e9e9; display: flex; align-items: center; justify-content: center; padding-right: 3px; }
.navstrip i { border: 4px solid transparent; border-left: 5px solid #666; border-right: 0; }
.canvas { width: 1318px; background: #999; padding-left: 239px; display: flex; }
.slide { width: 839px; background: #fefefe; padding-left: 27px; font-family: "DejaVu Sans", Verdana, sans-serif; color: #222; }
.slide-head { display: flex; justify-content: space-between; padding: 19px 14px 0 1px; height: 138px; }
.slide-head h2 { font-size: 22px; line-height: 25.500px; letter-spacing: .75px; color: #1a70a8; padding-top: 17px; }
.slide table { border-collapse: collapse; table-layout: fixed; width: 773px; font-size: 16px; line-height: 19.500px; letter-spacing: .18px; }
.slide td, .slide th { border: 1.500px solid #2278ab; padding: 4px 0 0 9px; vertical-align: top; white-space: nowrap; width: 33.33%; }
.slide th { color: #111; padding-left: 0; letter-spacing: .5px; }
.r1 { height: 27px; } .r2 { height: 28px; } .r3 { height: 67.500px; } .r4 { height: 47px; } .r5 { height: 68px; } .r6 { height: 67px; } .r7 { height: 87px; }
.slide footer { display: flex; padding: 64px 20px 0 274px; justify-content: space-between; font-size: 11.700px; align-items: center; }
.num { font-size: 10px; padding-top: 5px; }
.vscroll { width: 18px; background: #f0f0f0; display: flex; flex-direction: column; align-items: center; padding-top: 7px; }
.vscroll i { margin-top: 361px; width: 16px; height: 18px; background: #cdcdcd; }
.collapse { width: 24px; background: #ebebeb; border-left: 1px solid #d4d4d4; border-right: 1px solid #cfcfcf; display: flex; align-items: center; justify-content: center; }
.collapse i { border: 5px solid transparent; border-right: 6px solid #666; border-left: 0; }
.rtools { flex: 1; background: #fafafa; display: flex; flex-direction: column; align-items: center; padding-left: 3px; }
.mag { margin-top: 14px; margin-bottom: 13px; }
.rt { height: 48.300px; flex: none; display: flex; align-items: center; }
.rt:nth-child(2) { border-top: 1px solid #d0d0d0; width: 30px; justify-content: center; }
.clip { overflow: hidden; }

/* taskbar inside the shared screen */
.r-taskbar { height: 44px; background: #1e2020; display: flex; }
.r-start { width: 48px; display: flex; align-items: center; justify-content: center; padding: 0 4px 2px 0; color: #fff; }
.r-search { width: 360px; height: 43px; background: #f0f0f0; border-bottom: 2px solid #ccc; display: flex; align-items: center; padding-left: 12px; gap: 12px; font-size: 14.600px; color: #444; }
.r-ic { width: 51.300px; display: flex; align-items: center; justify-content: center; }
.lite { color: #ddd; }
.r-ic.ul { background: linear-gradient(#76b5ea, #76b5ea) center bottom / 42px 4px no-repeat; }
.r-ic.two { background: linear-gradient(90deg, #76b5ea 80%, #5c8db6 80%) center bottom / 42px 4px no-repeat; }
.r-ic.sel { background: linear-gradient(#76b5ea, #76b5ea) center bottom / 100% 4px no-repeat, #484848; }
.r-tray { flex: 1; display: flex; align-items: center; margin-left: 110px; padding-left: 5px; color: #eee; font-size: 14.200px; background: linear-gradient(90deg, transparent, #3d1b1b 110px); }
.r-tray span { margin: 0 18px 0 10px; }
.r-tray svg + svg { margin-left: 13px; }

/* overlays on the stage */
.tooltip { position: absolute; left: 420px; top: 115px; width: 163px; height: 22px; background: #ffffe1; border: 1px solid #555; box-shadow: 2px 2px 2px #888; color: #333; font-size: 12px; letter-spacing: -.2px; line-height: 20px; padding-left: 2px; white-space: nowrap; }
.pointer { position: absolute; left: 422px; top: 92px; }
.speaker { position: absolute; left: 20px; top: 816px; width: 248px; height: 36px; border-radius: 5px; background: rgba(0, 0, 0, .55); font-size: 17px; line-height: 36px; padding-left: 9px; white-space: nowrap; }
.self { position: absolute; left: 1196px; top: 732px; width: 237px; height: 132px; background: #1f1f1f; border-left: 3px solid #1a1a1a; display: flex; align-items: center; justify-content: center; }
.self-av { width: 84px; height: 84px; border-radius: 50%; background: #d9eff1; color: #33686b; font: 600 32px/84px "Open Sans", sans-serif; text-align: center; }

/* participants */
.panel { flex: 1; background: #1f1f1f; border-left: 1px solid #0c0c0c; position: relative; display: flex; flex-direction: column; overflow: hidden; }
.p-head { height: 91px; flex: none; border-bottom: 1px solid #0c0c0c; display: flex; align-items: center; justify-content: space-between; padding: 4px 45px 0 31px; }
.p-head h2 { font-weight: 700; font-size: 23px; letter-spacing: -.2px; padding-top: 2px; }
.p-find { margin: 24px 28px 0 31px; height: 48px; flex: none; border-radius: 5px; background: #292929; display: flex; align-items: center; justify-content: space-between; padding: 0 16px 0 18px; color: #c8c8c8; font-size: 19px; letter-spacing: .25px; }
.p-invite { margin: 15px 28px 0 31px; height: 48px; flex: none; border-radius: 5px; background: #292929; border: 1px solid #666; display: flex; align-items: center; justify-content: center; gap: 15px; font-weight: 700; font-size: 18.600px; }
.p-invite span { padding-top: 2px; }
.p-sec { margin: 35px 31px 0 12px; height: 36px; flex: none; display: flex; align-items: center; font-size: 17px; color: #e8e8e8; }
.p-sec i { border: 5px solid transparent; border-top: 6px solid #999; border-bottom: 0; margin-right: 10px; }
.p-sec b { margin-left: auto; width: 108px; height: 36px; line-height: 37px; text-align: center; border: 1px solid #666; border-radius: 5px; background: #292929; color: #fff; font-size: 16.500px; letter-spacing: -.2px; }
.people { list-style: none; margin-top: 13px; }
.people li { height: 72px; display: flex; align-items: center; padding: 0 31px 0 32px; }
.av { width: 48px; height: 48px; border-radius: 50%; font-weight: 600; font-size: 18px; line-height: 47px; text-align: center; position: relative; margin-right: 12px; }
.av::after { content: ""; position: absolute; left: 30px; top: 30px; width: 21px; height: 21px; border-radius: 50%; border: 3px solid #292929; background: #c4314b; }
.nm { flex: 1; font-size: 18.900px; letter-spacing: .25px; padding-top: 1px; }
.dots { margin-right: 14px; }
.a1 { background: #d9eff1; color: #33686b; }
.a2 { background: #ced9dd; color: #1f434b; }
.a3 { background: #c6d2e6; color: #0f2c5c; }
.a4 { background: #e2dcee; color: #4d4268; }
.a5 { background: #d5e2e8; color: #2b4e58; }
.a6 { background: #e6edda; color: #4f6136; }
.p-scroll { position: absolute; left: 464px; top: 256px; width: 9px; height: 181px; border-radius: 4px; background: #797979; }

/* desktop taskbar */
.taskbar { flex: 0 0 60px; background: #1c1c1c; display: flex; }
.start { width: 72px; display: flex; align-items: center; justify-content: center; }
.search { width: 516px; background: #f1f1f1; border: 2px solid #bdbdbd; display: flex; align-items: center; padding-left: 16px; gap: 18px; color: #111; font-size: 21px; letter-spacing: .2px; }
.search span { padding-top: 1px; }
.app { width: 75px; display: flex; align-items: center; justify-content: center; }
.app.tv { justify-content: flex-start; padding-left: 24px; }
.app.ul { background: linear-gradient(#76b5ea, #76b5ea) center bottom / 61px 3px no-repeat; }
.app.teams { margin-left: 2px; background: linear-gradient(90deg, #76b5ea 66px, #5c8db6 66px) 0 bottom / 73px 3px no-repeat, linear-gradient(90deg, #474747 66px, #222 66px 68px, #3a3a3a 68px 73px, transparent 73px); padding-right: 4px; }
.tray { margin-left: auto; display: flex; align-items: center; }
.temp { font-size: 19px; letter-spacing: .5px; margin: 4px 26px 0 16px; width: 114px; }
.tmic { margin-left: 19px; } .batt { margin-left: 16px; } .wifi { margin-left: 16px; }
.two-l { display: flex; flex-direction: column; align-items: center; gap: 7px; font-size: 16px; line-height: 21px; }
.lang { width: 34px; margin-left: 18px; }
.time { width: 94px; margin-left: 20px; font-size: 16.500px; }
.date { letter-spacing: .8px; }
.note { position: relative; margin-left: 28px; padding-top: 4px; }
.note span { position: absolute; left: 11px; top: 15px; width: 25px; height: 25px; border-radius: 50%; border: 1px solid #999; background: rgba(50, 50, 50, .9); font: 600 15px/23px "Open Sans", sans-serif; text-align: center; }
.peek { width: 2px; height: 60px; background: #777; margin: 0 6px 0 30px; }
```
